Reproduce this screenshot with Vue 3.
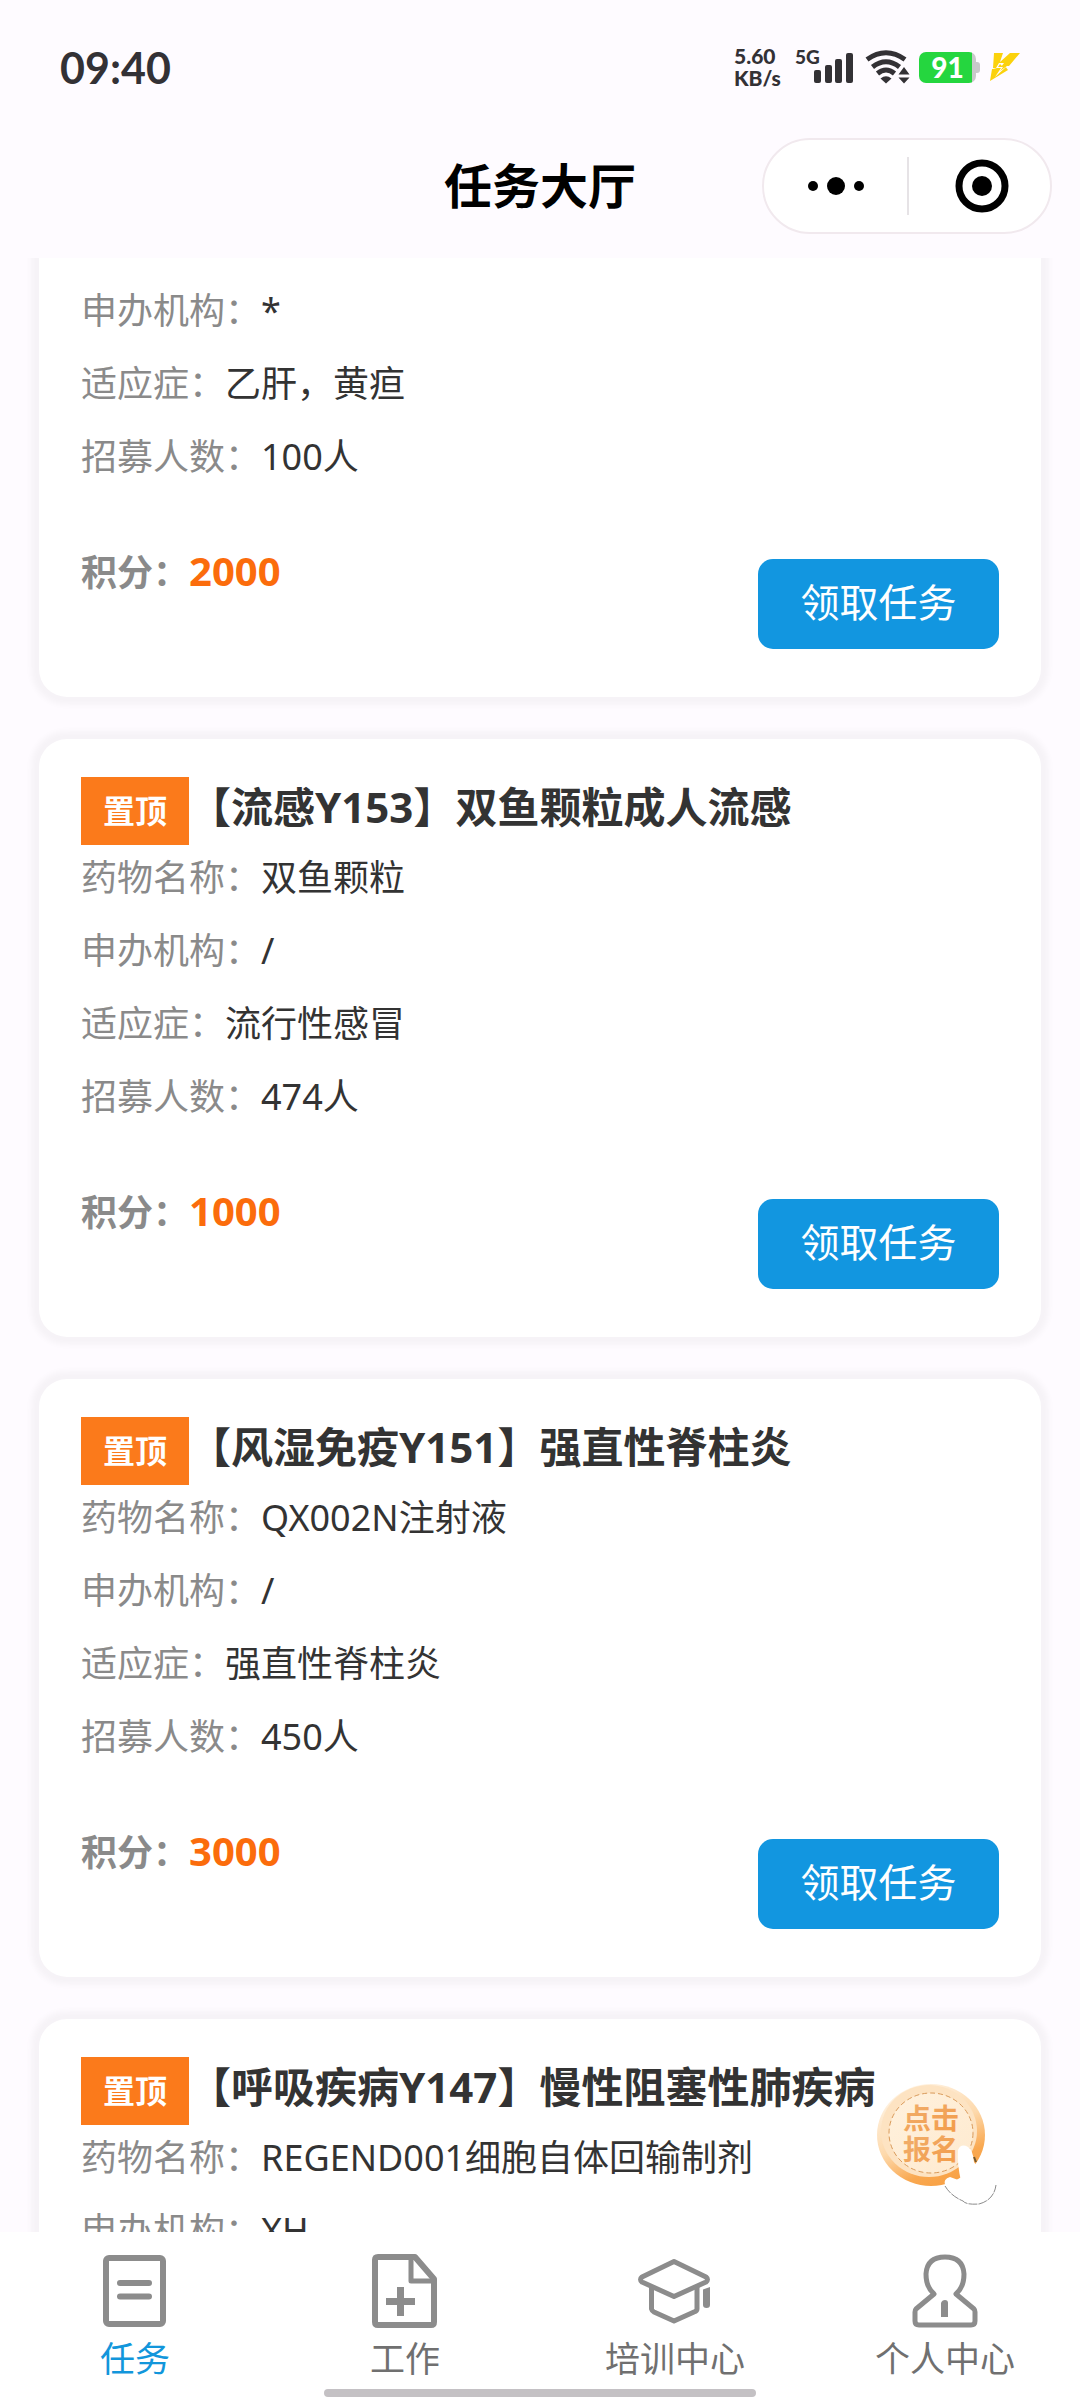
<script setup>
import { ref } from 'vue'

const tasks = [
  {
    id: 1,
    rows: [
      ['申办机构', '*'],
      ['适应症', '乙肝，黄疸'],
      ['招募人数', '100人'],
    ],
    points: 2000,
  },
  {
    id: 2,
    title: '【流感Y153】双鱼颗粒成人流感',
    rows: [
      ['药物名称', '双鱼颗粒'],
      ['申办机构', '/'],
      ['适应症', '流行性感冒'],
      ['招募人数', '474人'],
    ],
    points: 1000,
  },
  {
    id: 3,
    title: '【风湿免疫Y151】强直性脊柱炎',
    rows: [
      ['药物名称', 'QX002N注射液'],
      ['申办机构', '/'],
      ['适应症', '强直性脊柱炎'],
      ['招募人数', '450人'],
    ],
    points: 3000,
  },
  {
    id: 4,
    title: '【呼吸疾病Y147】慢性阻塞性肺疾病',
    rows: [
      ['药物名称', 'REGEND001细胞自体回输制剂'],
      ['申办机构', 'XH'],
    ],
  },
]

const tabs = [
  { key: 'task', label: '任务' },
  { key: 'work', label: '工作' },
  { key: 'train', label: '培训中心' },
  { key: 'me', label: '个人中心' },
]
const active = ref('task')
</script>

<template>
  <div class="screen" lang="zh-CN">
    <div class="status">
      <time class="clock">09:40</time>
      <div class="indicators">
        <div class="speed"><span>5.60</span><span>KB/s</span></div>
        <div class="signal">
          <span class="net">5G</span>
          <svg width="40" height="30" viewBox="0 0 40 30" fill="#333135" aria-hidden="true">
            <rect x="0" y="17" width="7" height="13" rx="2" />
            <rect x="11" y="12" width="7" height="18" rx="2" />
            <rect x="21" y="6" width="7" height="24" rx="2" />
            <rect x="32" y="0" width="7" height="30" rx="2" />
          </svg>
        </div>
        <svg class="wifi" width="46" height="34" viewBox="0 0 46 34" aria-hidden="true">
          <g fill="none" stroke="#333135" stroke-width="5">
            <path d="M2 9.500Q21 -4 40 9.500" />
            <path d="M7.500 17Q21 6.500 34.500 17" />
            <path d="M12.500 23.500Q21 16.500 29.500 23.500" />
          </g>
          <path d="M15.500 28.500Q21 24 26.500 28.500L21 33.500Z" fill="#333135" />
          <path d="M32 24L39 14L46 24V28L39 34L32 28Z" fill="#fefbff" />
          <path d="M33.500 24.500 39 17 44.500 24.500ZM33.500 27.500H44.500L39 33.500Z" fill="#333135" />
        </svg>
        <div class="battery"><span>91</span></div>
        <svg class="bolt" width="30" height="28" viewBox="0 0 30 28" fill="#fbd20c" aria-hidden="true">
          <path d="M4 0H13L10 9L20 0H30L19 13H15L18 17L0 28L2 16H7L3 15Z" />
          <path d="M9 10L6 15H11L5 24L16 14H11L14 10Z" fill="#fefbff" />
          <path d="M10 11L8 14H13L10 18L17 13H12Z" />
        </svg>
      </div>
    </div>

    <header class="nav">
      <h1>任务大厅</h1>
      <div class="capsule">
        <button type="button" aria-label="更多">
          <svg width="58" height="20" viewBox="0 0 58 20" aria-hidden="true">
            <circle cx="6" cy="10" r="5" /><circle cx="29" cy="10" r="9" /><circle cx="52" cy="10" r="5" />
          </svg>
        </button>
        <i></i>
        <button type="button" aria-label="关闭">
          <svg width="54" height="54" viewBox="0 0 54 54" aria-hidden="true">
            <circle cx="27" cy="27" r="23" fill="none" stroke="#000" stroke-width="7" />
            <circle cx="27" cy="27" r="10" />
          </svg>
        </button>
      </div>
    </header>

    <main class="list">
      <article v-for="t in tasks" :key="t.id" class="card" :class="{ cut: !t.title }">
        <div v-if="t.title" class="head">
          <span class="tag">置顶</span>
          <h2>{{ t.title }}</h2>
        </div>
        <dl>
          <div v-for="r in t.rows" :key="r[0]" class="row">
            <dt>{{ r[0] }}：</dt>
            <dd>{{ r[1] }}</dd>
          </div>
        </dl>
        <div v-if="t.points" class="foot">
          <p class="points">积分：<strong>{{ t.points }}</strong></p>
          <button type="button" class="claim">领取任务</button>
        </div>
      </article>
    </main>

    <footer class="bottom">
      <button type="button" class="signup" aria-label="点击报名">
        <svg width="126" height="126" viewBox="0 0 126 126" aria-hidden="true">
          <defs>
            <linearGradient id="rim" x1="0.200" y1="0" x2="0.700" y2="1">
              <stop offset="0" stop-color="#fff6ea" />
              <stop offset="0.500" stop-color="#fdd9ac" />
              <stop offset="0.800" stop-color="#f9a850" />
              <stop offset="1" stop-color="#f8a043" />
            </linearGradient>
            <linearGradient id="face" x1="0" y1="0" x2="1" y2="1">
              <stop offset="0" stop-color="#fff1dd" />
              <stop offset="1" stop-color="#feeacf" />
            </linearGradient>
            <linearGradient id="ink" x1="0" y1="0" x2="1" y2="1">
              <stop offset="0" stop-color="#f0b070" />
              <stop offset="1" stop-color="#f39a45" />
            </linearGradient>
          </defs>
          <ellipse cx="56" cy="53" rx="54" ry="51" fill="url(#rim)" />
          <ellipse cx="54" cy="49" rx="48" ry="46" fill="#fde3c2" />
          <ellipse cx="56" cy="51" rx="42" ry="40" fill="url(#face)" stroke="#d99a5a" stroke-width="1" stroke-dasharray="5 3" />
          <g class="coin-text" fill="url(#ink)" text-anchor="middle">
            <text x="56" y="47">点击</text>
            <text x="56" y="78">报名</text>
          </g>
          <path d="M83 68Q86 61 93 65Q98 68 99 80Q101 84 106 84Q118 86 121 97Q123 108 114 118Q103 126 89 120Q77 114 70 103Q68 97 75 95L86 99Q82 82 83 68Z" fill="#fff" />
          <path d="M70 104Q76 114 88 119Q91 123 104 122Q119 118 121 103" fill="none" stroke="#8b8b8b" stroke-width="1" stroke-dasharray="9 1" />
          <path d="M99 75L101 80" stroke="#70582f" stroke-width="2" />
        </svg>
      </button>

      <nav class="tabs">
        <button
          v-for="tab in tabs"
          :key="tab.key"
          type="button"
          class="tab"
          :class="{ active: active === tab.key }"
          @click="active = tab.key"
        >
          <svg width="74" height="74" viewBox="0 0 74 74" fill="none" stroke="#8c8c8c" stroke-width="6" stroke-linejoin="round" aria-hidden="true">
            <template v-if="tab.key === 'task'">
              <rect x="8" y="4" width="57" height="66" rx="3" />
              <path d="M22 29H51M22 42.500H51" stroke-linecap="round" />
            </template>
            <template v-else-if="tab.key === 'work'">
              <path d="M10 3H47L66 25V68Q66 71 63 71H10Q7 71 7 68V6Q7 3 10 3Z" />
              <path d="M43 4V27H65" stroke-width="5" />
              <path d="M18 47.500H47M32.500 33V62" stroke-width="7" />
            </template>
            <template v-else-if="tab.key === 'train'">
              <path d="M36 7.500 68 23Q71 25.500 68 28L36 42.500 4 28Q1 25.500 4 23Z" stroke-width="5" />
              <path d="M13.500 33V55Q14 57 16 58L36 67 56 58Q59 57 59 55V33" stroke-width="5" />
              <path d="M65 35.500 72 33V51Q72 54 68.500 54T65 51Z" fill="#8c8c8c" stroke="none" />
            </template>
            <template v-else>
              <path d="M26 40Q18 33 18 20Q19 3 37 3T56 20Q56 33 48 40L66 55Q67 56 67 58V67Q67 71 63 71H11Q7 71 7 67V58Q7 56 8 55Z" stroke-width="5" />
              <path d="M33 63V49Q34 46 37 46T40 49V63Z" fill="#8c8c8c" stroke="none" />
            </template>
          </svg>
          <span>{{ tab.label }}</span>
        </button>
      </nav>
      <div class="home-bar"></div>
    </footer>
  </div>
</template>

<style>
body {
  margin: 0;
  background: #fefbff;
}
</style>

<style scoped>
.screen {
  display: flex;
  flex-direction: column;
  height: 100vh;
  background: #fefbff;
  color: #333;
  font-family: "Noto Sans", "Noto Sans CJK SC", sans-serif;
}
h1, h2, p, dl, dd {
  margin: 0;
}
button {
  border: 0;
  padding: 0;
  background: none;
  font-family: inherit;
  cursor: pointer;
}
svg {
  display: block;
}

.status {
  display: flex;
  flex: none;
  justify-content: space-between;
  align-items: center;
  height: 138px;
  padding: 0 60px 4px;
  box-sizing: border-box;
  font-family: Lato, sans-serif;
  color: #333135;
}
.clock {
  font-size: 43px;
  font-weight: 700;
}
.indicators {
  display: flex;
  align-items: center;
}
.speed {
  display: flex;
  flex-direction: column;
  width: 61px;
  font-size: 21px;
  line-height: 22px;
  font-weight: 900;
}
.signal {
  display: flex;
  align-items: flex-end;
  width: 70px;
  height: 32px;
}
.signal svg {
  margin-left: -6px;
}
.net {
  align-self: flex-start;
  font-size: 19px;
  line-height: 12px;
  font-weight: 900;
}
.battery {
  position: relative;
  width: 57px;
  height: 31px;
  margin: 0 14px 0 8px;
  border-radius: 7px;
  background: linear-gradient(90deg, #25d63f 93%, #c9c9cb 93%);
  color: #fff;
  font-size: 28px;
  line-height: 31px;
  font-weight: 900;
  text-align: center;
}
.battery::after {
  content: "";
  position: absolute;
  left: 100%;
  top: 10px;
  width: 4px;
  height: 11px;
  border-radius: 0 3px 3px 0;
  background: #c9c9cb;
}

.nav {
  display: grid;
  grid-template-columns: 1fr auto 1fr;
  flex: none;
  align-items: center;
  height: 120px;
  padding-bottom: 24px;
  box-sizing: border-box;
}
.nav h1 {
  grid-column: 2;
  color: #000;
  font-size: 48px;
  line-height: 94px;
  font-weight: 700;
}
.capsule {
  justify-self: end;
  display: grid;
  grid-template-columns: 143px 2px 1fr;
  align-items: center;
  width: 290px;
  height: 96px;
  margin-right: 28px;
  border: 2px solid #f1e9ee;
  border-radius: 48px;
  background: #fff;
  box-sizing: border-box;
}
.capsule button {
  display: flex;
  justify-content: center;
}
.capsule button:last-child {
  padding-left: 4px;
}
.capsule i {
  height: 58px;
  background: #e6e3e6;
}

.list {
  display: flex;
  flex: 1;
  flex-direction: column;
  gap: 42px;
  min-height: 0;
  padding: 0 39px;
  overflow: hidden;
}
.card {
  flex: none;
  padding: 38px 42px 48px;
  border-radius: 28px;
  background: #fff;
  box-shadow: 0 0 6px 8px rgba(0, 0, 0, 0.035);
}
.card.cut {
  padding-top: 28px;
  border-radius: 0 0 28px 28px;
}
.head {
  display: flex;
  align-items: flex-start;
  margin-bottom: 8px;
}
.tag {
  flex: none;
  padding: 0 22px;
  background: #fb7a1b;
  color: #fff;
  font-size: 32px;
  line-height: 68px;
  font-weight: 700;
}
h2 {
  font-size: 42px;
  line-height: 60px;
  font-weight: 700;
  white-space: nowrap;
}
dl {
  display: flex;
  flex-direction: column;
  gap: 23px;
}
.row {
  display: flex;
  font-size: 36px;
  line-height: 50px;
}
dt {
  color: #8a8a8a;
}
.foot {
  display: flex;
  justify-content: space-between;
  align-items: flex-end;
  height: 102px;
  margin-top: 65px;
}
.points {
  align-self: flex-start;
  color: #8a8a8a;
  font-size: 36px;
  line-height: 48px;
  font-weight: 700;
}
.points strong {
  color: #fb6c0c;
  font-size: 40px;
  font-weight: 700;
}
.claim {
  width: 241px;
  height: 90px;
  padding-bottom: 8px;
  border-radius: 15px;
  background: #1296e0;
  color: #fff;
  font-size: 39px;
}

.bottom {
  position: relative;
  flex: none;
  background: #fff;
}
.tabs {
  display: grid;
  grid-template-columns: repeat(4, 1fr);
  height: 168px;
}
.tab {
  display: flex;
  flex-direction: column;
  align-items: center;
  padding-top: 22px;
  color: #707070;
  font-size: 35px;
  line-height: 50px;
}
.tab span {
  margin-top: 6px;
}
.tab.active {
  color: #1296db;
}
.home-bar {
  position: absolute;
  left: 30%;
  right: 30%;
  bottom: 3px;
  height: 8px;
  border-radius: 4px;
  background: #c4c1c4;
}
.signup {
  position: absolute;
  right: 79px;
  bottom: 192px;
}
.coin-text {
  font-family: "Noto Sans CJK SC", sans-serif;
  font-size: 28px;
  font-weight: 700;
}
</style>
